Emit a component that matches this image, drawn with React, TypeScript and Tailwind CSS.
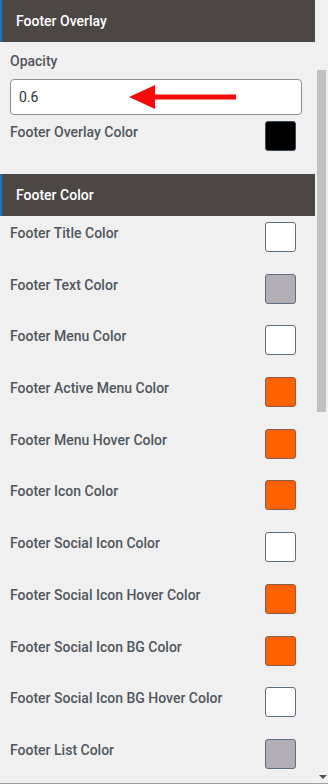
import React from "react";

type ColorRow = { label: string; color: string };

const ROWS: ColorRow[] = [
  { label: "Footer Title Color", color: "#ffffff" },
  { label: "Footer Text Color", color: "#b1aeb6" },
  { label: "Footer Menu Color", color: "#ffffff" },
  { label: "Footer Active Menu Color", color: "#ff6000" },
  { label: "Footer Menu Hover Color", color: "#ff6000" },
  { label: "Footer Icon Color", color: "#ff6000" },
  { label: "Footer Social Icon Color", color: "#ffffff" },
  { label: "Footer Social Icon Hover Color", color: "#ff6000" },
  { label: "Footer Social Icon BG Color", color: "#ff6000" },
  { label: "Footer Social Icon BG Hover Color", color: "#ffffff" },
  { label: "Footer List Color", color: "#b1aeb6" },
];

function SectionTitle({ title }: { title: string }) {
  return (
    <div className="flex h-[42px] items-center border-l-2 border-[#1f74b8] bg-[#4c4745] pl-[14px] text-[14px] font-medium text-white">
      {title}
    </div>
  );
}

function Swatch({ color }: { color: string }) {
  const dark = color === "#000000";
  return (
    <span
      className={`block h-[30px] w-[31px] shrink-0 rounded-[3px] border ${
        dark ? "border-[#3a4a5a]" : color === "#ff6000" ? "border-[#8a5a4a]" : "border-[#5b6f80]"
      }`}
      style={{ backgroundColor: color }}
    />
  );
}

export default function App() {
  return (
    <div
      className="flex h-[784px] w-[328px] overflow-hidden border-b border-[#a0a0a0] bg-[#f0f0f0] text-[#50575e]"
      style={{ fontFamily: "Roboto, 'Liberation Sans', sans-serif" }}
    >
      <div className="w-[315px] shrink-0">
        <SectionTitle title="Footer Overlay" />
        <div className="px-[10px]">
          <p className="mt-[9px] text-[14px] font-medium leading-5">Opacity</p>
          <div className="relative mt-[8px] flex h-[36px] w-[292px] items-center rounded-[4px] border border-[#8c8f94] bg-white px-[8px] text-[14px] text-[#2c3338]">
            0.6
            <svg
              className="absolute left-[118px] top-[4px]"
              width="108"
              height="26"
              viewBox="0 0 108 26"
            >
              <polygon points="0,13 26,1 26,25" fill="#f40c0c" />
              <rect x="24" y="10.5" width="83" height="5" fill="#f40c0c" />
            </svg>
          </div>
          <div className="mt-[6px] flex items-start justify-between pr-[9px]">
            <p className="pt-[1px] text-[14px] font-medium leading-5">Footer Overlay Color</p>
            <Swatch color="#000000" />
          </div>
        </div>
        <div className="mt-[23px]">
          <SectionTitle title="Footer Color" />
        </div>
        <div className="mt-[6px] flex flex-col gap-[21.7px] pl-[10px] pr-[19px]">
          {ROWS.map((row) => (
            <div key={row.label} className="flex items-start justify-between">
              <p className="pt-[1px] text-[14px] font-medium leading-5">{row.label}</p>
              <Swatch color={row.color} />
            </div>
          ))}
        </div>
      </div>
      <div className="relative flex w-[13px] flex-col bg-[#f1f1f1]">
        <div className="ml-[2px] mt-[70px] h-[342px] w-[9px] bg-[#c1c1c1]" />
        <span className="absolute bottom-[4px] left-[4px] h-0 w-0 border-x-[4px] border-t-[4px] border-x-transparent border-t-[#505050]" />
      </div>
    </div>
  );
}
